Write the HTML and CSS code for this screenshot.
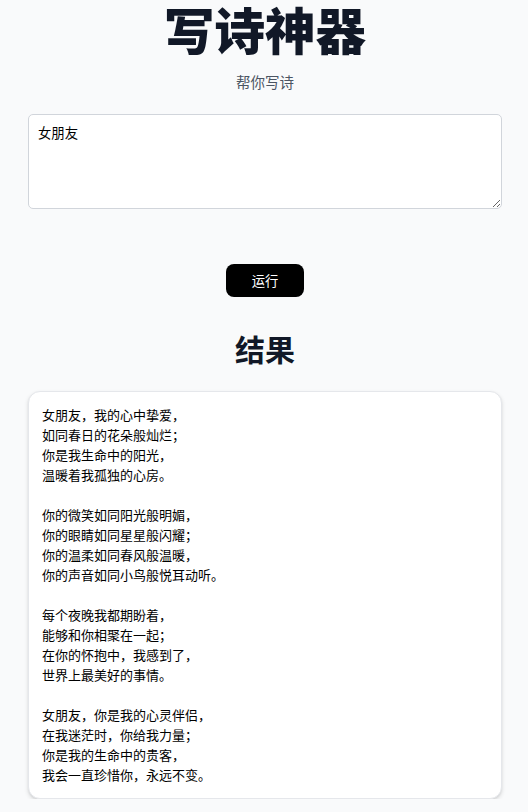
FILE: index.html
```html
<!DOCTYPE html>
<html lang="zh-CN">
<head>
<meta charset="utf-8">
<title>写诗神器</title>
<link rel="stylesheet" href="styles.css">
</head>
<body>
<main class="page">
  <h1 class="title">写诗神器</h1>
  <p class="subtitle">帮你写诗</p>
  <textarea class="prompt">女朋友</textarea>
  <div class="actions"><button class="run">运行</button></div>
  <h2 class="result-title">结果</h2>
  <div class="result">女朋友，我的心中挚爱，
如同春日的花朵般灿烂；
你是我生命中的阳光，
温暖着我孤独的心房。

你的微笑如同阳光般明媚，
你的眼睛如同星星般闪耀；
你的温柔如同春风般温暖，
你的声音如同小鸟般悦耳动听。

每个夜晚我都期盼着，
能够和你相聚在一起；
在你的怀抱中，我感到了，
世界上最美好的事情。

女朋友，你是我的心灵伴侣，
在我迷茫时，你给我力量；
你是我的生命中的贵客，
我会一直珍惜你，永远不变。</div>
</main>
</body>
</html>
```
FILE: styles.css
```css
html, body {
  margin: 0;
  padding: 0;
  background: #f9fafb;
}
body {
  font-family: "Noto Sans CJK SC", "Noto Sans", sans-serif;
  color: #111827;
}
.page {
  padding: 0 26px 0 28px;
  display: flex;
  flex-direction: column;
}
.title {
  margin: 0;
  font-size: 50.5px;
  line-height: 56px;
  font-weight: 900;
  text-align: center;
  color: #111827;
}
.subtitle {
  margin: 16px 0 0;
  font-size: 14.5px;
  line-height: 20px;
  text-align: center;
  color: #4b5563;
}
.prompt {
  margin-top: 22px;
  box-sizing: border-box;
  width: 100%;
  height: 95px;
  padding: 8px 9px;
  border: 1px solid #d1d5db;
  border-radius: 5px;
  background: #fff;
  font-family: "Noto Sans CJK SC", sans-serif;
  font-size: 13.333px;
  color: #000;
  resize: both;
}
.actions {
  display: flex;
  justify-content: center;
  margin-top: 55px;
}
.run {
  width: 78px;
  height: 33px;
  border: none;
  border-radius: 8px;
  background: #000;
  color: #fff;
  font-family: "Noto Sans CJK SC", sans-serif;
  font-size: 13.333px;
  padding: 0;
}
.result-title {
  margin: 33px 0 0;
  font-size: 30px;
  line-height: 36px;
  font-weight: 700;
  text-align: center;
  color: #111827;
}
.result {
  margin-top: 25px;
  background: #fff;
  border: 1px solid #e5e7eb;
  border-radius: 12px;
  box-shadow: 0 2px 4px rgba(0,0,0,0.12), 0 1px 2px rgba(0,0,0,0.06);
  padding: 13px 13px;
  font-size: 13px;
  line-height: 20px;
  color: #000;
  white-space: pre-line;
}
```
